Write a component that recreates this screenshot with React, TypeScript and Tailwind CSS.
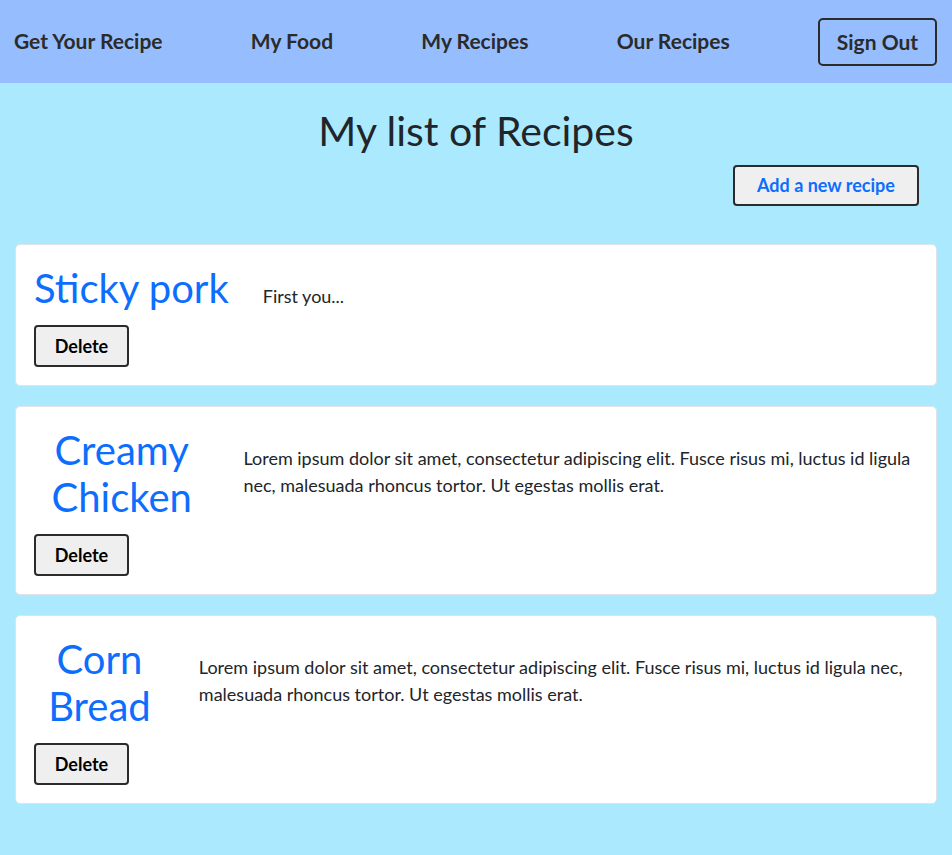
import React from "react";

const recipes = [
    { id: 1, title: "Sticky pork", body: "First you..." },
    {
        id: 2,
        title: "Creamy Chicken",
        body: "Lorem ipsum dolor sit amet, consectetur adipiscing elit. Fusce risus mi, luctus id ligula nec, malesuada rhoncus tortor. Ut egestas mollis erat.",
    },
    {
        id: 3,
        title: "Corn Bread",
        body: "Lorem ipsum dolor sit amet, consectetur adipiscing elit. Fusce risus mi, luctus id ligula nec, malesuada rhoncus tortor. Ut egestas mollis erat.",
    },
];

function NavBar() {
    const links = ["Get Your Recipe", "My Food", "My Recipes", "Our Recipes"];
    return (
        <nav className="flex h-[83px] items-center justify-between bg-[#96bdfe] pl-[14px] pr-[15px]">
            {links.map((l) => (
                <a key={l} className="-mt-[2px] text-[21px] font-bold text-[#2b2b2b]">
                    {l}
                </a>
            ))}
            <button className="h-[48px] w-[119px] rounded-[5px] border-2 border-[#2b2b2b] text-[21px] font-bold text-[#2b2b2b]">
                Sign Out
            </button>
        </nav>
    );
}

function RecipeCard({ title, body }: { title: string; body: string }) {
    return (
        <div className="rounded-[5px] border border-[#dfe3e8] bg-white px-[18px] pt-[20px] pb-[18px]">
            <div className="flex items-baseline gap-[34px]">
                <div className="flex flex-col">
                    <h2 className="text-center text-[40px] leading-[47px] text-[#0d6efd]">
                        {title}
                    </h2>
                    <button className="mt-[13px] h-[42px] w-[95px] self-start rounded-[4px] border-2 border-[#2b2b2b] bg-[#efefef] text-[18px] font-bold text-black">
                        Delete
                    </button>
                </div>
                <p className="text-[18px] leading-[27px] text-[#212529]">{body}</p>
            </div>
        </div>
    );
}

export default function App() {
    return (
        <div className="min-h-screen bg-[#abeafe] font-['Lato',sans-serif]">
            <NavBar />
            <main className="px-[15px] pb-10">
                <h1 className="pt-[23px] text-center text-[41px] leading-[1.2] text-[#212529]">
                    My list of Recipes
                </h1>
                <div className="mt-[10px] flex justify-end pr-[18px]">
                    <button className="h-[41px] w-[186px] rounded-[4px] border-2 border-[#2b2b2b] bg-[#efefef] text-[18px] font-bold text-[#0d6efd]">
                        Add a new recipe
                    </button>
                </div>

                {/* recipe list */}
                <div className="mt-[38px] flex flex-col gap-5">
                    {recipes.map((r) => (
                        <RecipeCard key={r.id} title={r.title} body={r.body} />
                    ))}
                </div>
            </main>
        </div>
    );
}
